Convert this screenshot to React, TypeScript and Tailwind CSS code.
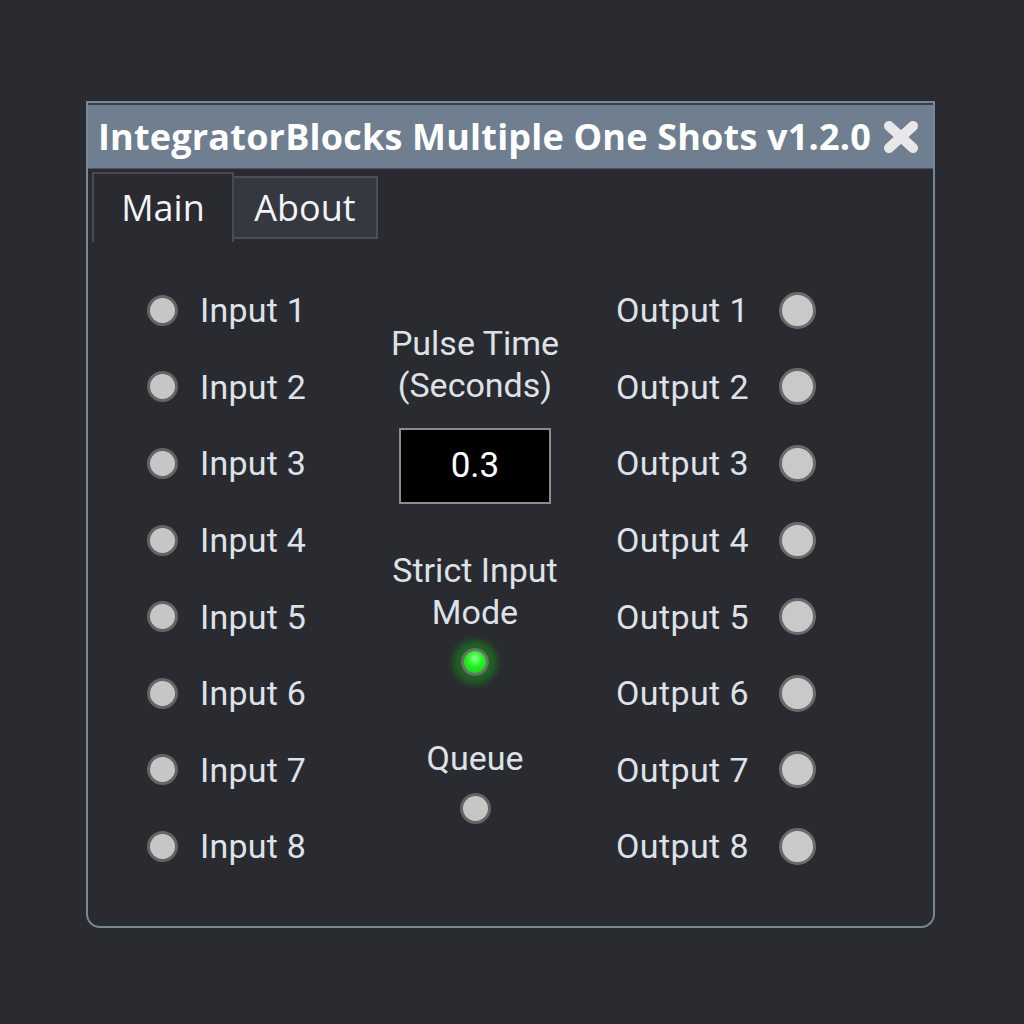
import React from "react";

const rows = [1, 2, 3, 4, 5, 6, 7, 8];

function Led({ size, on }: { size: "sm" | "lg"; on?: boolean }) {
  if (on) {
    return (
      <div className="w-[28px] h-[28px] rounded-full border-[3px] border-[#6d6d6d] bg-[radial-gradient(circle_at_50%_35%,#8dff8d_0%,#1ef01e_45%,#12d012_100%)] shadow-[0_0_7px_8px_rgba(20,160,20,0.5)]" />
    );
  }
  return (
    <div
      className={
        size === "lg"
          ? "w-[37px] h-[37px] rounded-full border-[3px] border-[#6a6a6a] bg-[#c9c9c9]"
          : "w-[31px] h-[31px] rounded-full border-[3px] border-[#646464] bg-[#c6c6c6]"
      }
    />
  );
}

export default function App() {
  return (
    <div className="w-full h-[1024px] bg-[#2a2b30] pt-[101px] pl-[86px] font-['Roboto',sans-serif]">
      {/* window */}
      <div className="w-[849px] h-[827px] border-2 border-[#76879a] rounded-b-[14px] bg-[#2a2b30] flex flex-col overflow-hidden">
        {/* title bar */}
        <div className="h-[66px] bg-[#6f7f8f] border-t-2 border-[#3a3f47] border-b border-b-[#4a5560] flex items-center justify-between pl-[10px] pr-[14px]">
          <span className="font-['Open_Sans',sans-serif] font-bold text-[36px] text-white tracking-[0.2px] leading-none">
            IntegratorBlocks Multiple One Shots v1.2.0
          </span>
          <svg width="36" height="34" viewBox="0 0 36 34">
            <path d="M6 6 L30 28 M30 6 L6 28" stroke="#e8e8e8" strokeWidth="10" strokeLinecap="round" />
          </svg>
        </div>

        {/* tabs */}
        <div className="flex items-start pl-[4px] pt-[3px]">
          <div className="w-[142px] h-[70px] bg-[#2a2b30] border-l-2 border-r-2 border-t-2 border-[#484b52] flex items-center justify-center font-['Open_Sans',sans-serif] text-[36px] text-[#f2f4f6]">
            Main
          </div>
          <div className="w-[144px] h-[63px] mt-[4px] bg-[#35383e] border-2 border-l-0 border-[#4c4f56] flex items-center justify-center font-['Open_Sans',sans-serif] text-[36px] text-[#f2f4f6]">
            About
          </div>
        </div>

        {/* content */}
        <div className="flex pl-[59px] pt-[30px]">
          {/* inputs */}
          <div className="w-[243px] flex flex-col">
            {rows.map((n) => (
              <div key={n} className="h-[76.6px] flex items-center">
                <Led size="sm" />
                <span className="ml-[22px] text-[34px] text-[#dde2e8] leading-none tracking-[0.2px]">Input {n}</span>
              </div>
            ))}
          </div>

          {/* center */}
          <div className="w-[170px] flex flex-col items-center pt-[50px] text-[34px] text-[#dde2e8] leading-[42px] text-center whitespace-nowrap">
            <span>Pulse Time</span>
            <span>(Seconds)</span>
            <div className="mt-[22px] w-[152px] h-[76px] bg-black border-2 border-[#8c8c8c] flex items-center justify-center text-white text-[35px]">
              0.3
            </div>
            <span className="mt-[45px]">Strict Input</span>
            <span>Mode</span>
            <div className="mt-[15px]">
              <Led size="sm" on />
            </div>
            <span className="mt-[61px]">Queue</span>
            <div className="mt-[14px]">
              <Led size="sm" />
            </div>
          </div>

          {/* outputs */}
          <div className="w-[256px] flex flex-col">
            {rows.map((n) => (
              <div key={n} className="h-[76.6px] flex items-center justify-end">
                <span className="text-[34px] text-[#dde2e8] leading-none tracking-[0.4px]">Output {n}</span>
                <div className="ml-[30px]">
                  <Led size="lg" />
                </div>
              </div>
            ))}
          </div>
        </div>
      </div>
    </div>
  );
}
